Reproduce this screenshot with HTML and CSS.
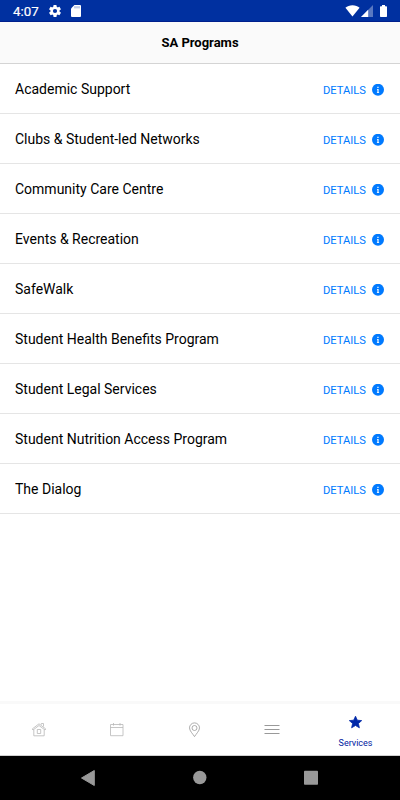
FILE: index.html
```html
<!DOCTYPE html>
<html lang="en">
<head>
<meta charset="utf-8">
<title>SA Programs</title>
<link rel="stylesheet" href="styles.css">
</head>
<body>
<div class="status">
  <span class="time">4:07</span>
  <svg class="gear" width="12" height="12" viewBox="2 2 20 20"><path fill="#fff" d="M19.43 12.98c.04-.32.07-.64.07-.98s-.03-.66-.07-.98l2.11-1.65c.19-.15.24-.42.12-.64l-2-3.46c-.12-.22-.39-.3-.61-.22l-2.49 1c-.52-.4-1.08-.73-1.69-.98l-.38-2.65A.49.49 0 0 0 14 2h-4c-.25 0-.46.18-.49.42l-.38 2.65c-.61.25-1.17.59-1.69.98l-2.49-1c-.23-.09-.49 0-.61.22l-2 3.46c-.13.22-.07.49.12.64l2.11 1.65c-.04.32-.07.65-.07.98s.03.66.07.98l-2.11 1.65c-.19.15-.24.42-.12.64l2 3.46c.12.22.39.3.61.22l2.49-1c.52.4 1.08.73 1.69.98l.38 2.65c.03.24.24.42.49.42h4c.25 0 .46-.18.49-.42l.38-2.65c.61-.25 1.17-.59 1.69-.98l2.49 1c.23.09.49 0 .61-.22l2-3.46c.12-.22.07-.49-.12-.64zM12 15.5a3.5 3.5 0 1 1 0-7 3.5 3.5 0 0 1 0 7z"/></svg>
  <svg class="sd" width="10" height="12" viewBox="0 0 10 12"><path fill="#fff" d="M3.4 0H9a1 1 0 0 1 1 1v10a1 1 0 0 1-1 1H1a1 1 0 0 1-1-1V3.4z"/><path stroke="#0030a0" stroke-opacity=".55" stroke-width=".9" d="M4 1.2v2.2M6 1.2v2.2M8 1.2v2.2"/></svg>
  <span class="spacer"></span>
  <svg width="15" height="12" viewBox="0 0 15 12"><path fill="#fff" d="M7.5 11.5.4 2.7C2.200 1.200 4.700.3 7.500.3s5.300.9 7.100 2.400z"/></svg>
  <svg class="cell" width="12" height="12" viewBox="0 0 12 12"><path fill="#fff" fill-opacity=".35" d="M12 0v12H0z"/><path fill="#fff" d="M7.200 4.800V12H0z"/></svg>
  <svg class="battery" width="7" height="12" viewBox="0 0 7 12"><path fill="#fff" d="M2 0h3v1.200h1.300a.7.7 0 0 1 .7.700v9.400a.7.7 0 0 1-.7.700H.7a.7.7 0 0 1-.7-.7V1.900a.7.7 0 0 1 .7-.7H2z"/></svg>
</div>
<header class="header">SA Programs</header>
<main class="list">
  <div class="row"><span class="name">Academic Support</span><span class="details">DETAILS</span><svg class="info" viewBox="0 0 12 12"><use href="#info"/></svg></div>
  <div class="row"><span class="name">Clubs &amp; Student-led Networks</span><span class="details">DETAILS</span><svg class="info" viewBox="0 0 12 12"><use href="#info"/></svg></div>
  <div class="row"><span class="name">Community Care Centre</span><span class="details">DETAILS</span><svg class="info" viewBox="0 0 12 12"><use href="#info"/></svg></div>
  <div class="row"><span class="name">Events &amp; Recreation</span><span class="details">DETAILS</span><svg class="info" viewBox="0 0 12 12"><use href="#info"/></svg></div>
  <div class="row"><span class="name">SafeWalk</span><span class="details">DETAILS</span><svg class="info" viewBox="0 0 12 12"><use href="#info"/></svg></div>
  <div class="row"><span class="name">Student Health Benefits Program</span><span class="details">DETAILS</span><svg class="info" viewBox="0 0 12 12"><use href="#info"/></svg></div>
  <div class="row"><span class="name">Student Legal Services</span><span class="details">DETAILS</span><svg class="info" viewBox="0 0 12 12"><use href="#info"/></svg></div>
  <div class="row"><span class="name">Student Nutrition Access Program</span><span class="details">DETAILS</span><svg class="info" viewBox="0 0 12 12"><use href="#info"/></svg></div>
  <div class="row"><span class="name">The Dialog</span><span class="details">DETAILS</span><svg class="info" viewBox="0 0 12 12"><use href="#info"/></svg></div>
</main>
<nav class="tabs">
  <div class="tab"><svg width="16" height="16" viewBox="0 0 16 16"><path d="M1.200 7 8 1.800 14.800 7l-.8 1L8 3.500 2 8zM10.300 2.700V1.500h2.200v3M2.800 7.800v6h10.400v-6M6.300 7.500h3.400v4H6.300z"/></svg></div>
  <div class="tab"><svg width="16" height="16" viewBox="0 0 16 16"><path d="M1.500 2.500h12.500v11.200H1.500zM1.500 5.500H14M4.500 1v2.600M11 1v2.600"/></svg></div>
  <div class="tab"><svg width="16" height="16" viewBox="0 0 16 16"><path class="pin" d="M8.500 14.600C6.900 12 3.500 8.800 3.500 5.900a5 5 0 0 1 10 0C13.500 8.800 10.100 12 8.500 14.600z"/><circle class="pin" cx="8.500" cy="6" r="2.500"/></svg></div>
  <div class="tab"><svg width="16" height="16" viewBox="0 0 16 16"><path class="lines" d="M.5 3.500h15M.5 7.500h15M.5 11.500h15"/></svg></div>
  <div class="tab active"><svg width="14" height="14" viewBox="0 0 14 14"><path d="m6.500 1.200 1.800 4 4.400.4-3.300 2.900 1 4.300-3.900-2.300-3.900 2.300 1-4.300L.3 5.600l4.400-.4z"/></svg><span>Services</span></div>
</nav>
<div class="system">
  <svg width="400" height="44" viewBox="0 0 400 44"><g fill="#999"><path d="M81.500 22 94.300 14.500v15z" stroke="#999" stroke-linejoin="round"/><circle cx="199.800" cy="21.500" r="6.700"/><rect x="304" y="14.700" width="14" height="14" rx=".8"/></g></svg>
</div>
<svg class="defs"><symbol id="info" viewBox="0 0 12 12"><circle cx="6" cy="5.800" r="6" fill="#007aff"/><path fill="#fff" d="M5.300 2.700h1.300v1.200H5.300zM5 5h1.600v3.300h.5v.7H4.900v-.7h.5V5.700H5z"/></symbol></svg>
</body>
</html>
```
FILE: styles.css
```css
* { box-sizing: border-box; }
body {
  margin: 0;
  height: 800px;
  display: flex;
  flex-direction: column;
  overflow: hidden;
  background: #fff;
  color: #000;
  font-family: Roboto, sans-serif;
}
svg { display: block; flex: none; }
.status {
  height: 22px;
  display: flex;
  align-items: center;
  padding: 1px 13px 0 13px;
  background: #0030a0;
  border-bottom: 1px solid #001f8c;
  color: #fff;
}
.time { width: 36px; padding-top: 1px; font-size: 13.3px; line-height: 20px; -webkit-text-stroke: .2px #fff; }
.sd { margin-left: 10px; }
.spacer { flex: 1; }
.cell { margin-left: 1px; }
.battery { margin-left: 7px; }
.header {
  height: 42px;
  background: #fafafa;
  border-bottom: 1px solid #d4d4d4;
  text-align: center;
  font-size: 13px;
  font-weight: 700;
  line-height: 42px;
}
.list { flex: 1; }
.row {
  height: 50px;
  display: flex;
  align-items: center;
  padding: 2px 16px 0 15px;
  border-bottom: 1px solid #e5e5e5;
}
.name { flex: 1; font-size: 14px; padding-bottom: 1px; }
.details { color: #007aff; font-size: 11.2px; margin-right: 6px; padding-top: 1px; }
.info { width: 12px; height: 12px; }
.tabs {
  height: 55px;
  display: flex;
  border-top: 3px solid #f9f9f9;
  border-bottom: 1px solid #d0d0d0;
}
.tab { flex: 1; display: flex; flex-direction: column; align-items: center; padding-top: 18px; }
.tab path, .tab circle { fill: none; stroke: #b8b8b8; stroke-width: .8; }
.tab .pin { stroke: #999; }
.tab .lines { stroke: #999; stroke-width: 1; }
.tab.active { flex: none; width: 89px; padding-top: 11px; color: #0020a0; font-size: 9px; }
.tab.active path { fill: #0028a8; stroke: #0028a8; stroke-linejoin: round; }
.tab.active span { margin-top: 8px; line-height: 12px; }
.system { height: 44px; background: #000; }
.defs { position: absolute; width: 0; height: 0; }
```
